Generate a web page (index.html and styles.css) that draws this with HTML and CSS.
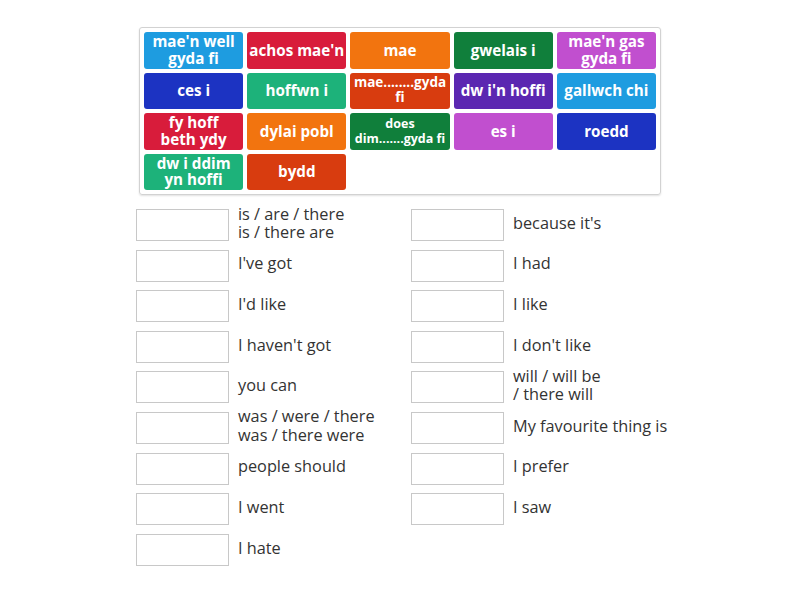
FILE: index.html
```html
<!DOCTYPE html>
<html>
<head>
<meta charset="utf-8">
<link rel="stylesheet" href="styles.css">
</head>
<body>
<div class="page">
  <div class="bank">
    <div class="tile c-sky">mae'n well<br>gyda fi</div>
    <div class="tile c-red">achos mae'n</div>
    <div class="tile c-orange">mae</div>
    <div class="tile c-green">gwelais i</div>
    <div class="tile c-magenta">mae'n gas<br>gyda fi</div>
    <div class="tile c-navy">ces i</div>
    <div class="tile c-teal">hoffwn i</div>
    <div class="tile c-rust small">mae........gyda fi</div>
    <div class="tile c-purple">dw i'n hoffi</div>
    <div class="tile c-sky">gallwch chi</div>
    <div class="tile c-red">fy hoff<br>beth ydy</div>
    <div class="tile c-orange">dylai pobl</div>
    <div class="tile c-green smaller">does dim.......gyda fi</div>
    <div class="tile c-magenta">es i</div>
    <div class="tile c-navy">roedd</div>
    <div class="tile c-teal">dw i ddim<br>yn hoffi</div>
    <div class="tile c-rust">bydd</div>
  </div>

  <div class="pairs">
    <div class="pair"><div class="slot"></div><div class="label">is / are / there<br>is / there are</div></div>
    <div class="pair"><div class="slot"></div><div class="label">I've got</div></div>
    <div class="pair"><div class="slot"></div><div class="label">I'd like</div></div>
    <div class="pair"><div class="slot"></div><div class="label">I haven't got</div></div>
    <div class="pair"><div class="slot"></div><div class="label">you can</div></div>
    <div class="pair"><div class="slot"></div><div class="label">was / were / there<br>was / there were</div></div>
    <div class="pair"><div class="slot"></div><div class="label">people should</div></div>
    <div class="pair"><div class="slot"></div><div class="label">I went</div></div>
    <div class="pair"><div class="slot"></div><div class="label">I hate</div></div>
    <div class="pair"><div class="slot"></div><div class="label">because it's</div></div>
    <div class="pair"><div class="slot"></div><div class="label">I had</div></div>
    <div class="pair"><div class="slot"></div><div class="label">I like</div></div>
    <div class="pair"><div class="slot"></div><div class="label">I don't like</div></div>
    <div class="pair"><div class="slot"></div><div class="label">will / will be<br>/ there will</div></div>
    <div class="pair"><div class="slot"></div><div class="label">My favourite thing is</div></div>
    <div class="pair"><div class="slot"></div><div class="label">I prefer</div></div>
    <div class="pair"><div class="slot"></div><div class="label">I saw</div></div>
  </div>
</div>
</body>
</html>
```

FILE: styles.css
```css
html, body {
  margin: 0;
  padding: 0;
  background: #ffffff;
}

body {
  font-family: "Open Sans", "Liberation Sans", sans-serif;
  color: #333333;
}

.page {
  width: 800px;
  padding-top: 27px;
}

.bank {
  margin-left: 139px;
  width: 522px;
  box-sizing: border-box;
  border: 1px solid #d2d2d2;
  border-radius: 3px;
  padding: 4px;
  display: grid;
  grid-template-columns: repeat(5, 1fr);
  grid-auto-rows: 36.5px;
  gap: 4px;
  box-shadow: 0 1px 2px rgba(0, 0, 0, 0.12);
}

.tile {
  display: flex;
  align-items: center;
  justify-content: center;
  text-align: center;
  color: #ffffff;
  font-weight: 700;
  font-size: 15.2px;
  line-height: 16.5px;
  border-radius: 3px;
  padding: 0 0 1px 0;
  box-sizing: border-box;
  overflow: hidden;
}

.tile.small {
  font-size: 13.5px;
  line-height: 15.5px;
}

.tile.smaller {
  font-size: 12.5px;
  line-height: 15px;
}

.c-sky { background: #1e9ce0; }
.c-red { background: #d81c3b; }
.c-orange { background: #f2740f; }
.c-green { background: #107f3b; }
.c-magenta { background: #c14fcf; }
.c-navy { background: #1c33c2; }
.c-teal { background: #1db27a; }
.c-rust { background: #d83c0f; }
.c-purple { background: #5b27b1; }

.pairs {
  margin-top: 14px;
  margin-left: 136px;
  display: grid;
  grid-template-columns: 275px 275px;
  grid-template-rows: repeat(9, 32px);
  grid-auto-flow: column;
  row-gap: 8.6px;
}

.pair {
  display: flex;
  align-items: center;
}

.slot {
  width: 93px;
  height: 32px;
  box-sizing: border-box;
  border: 1px solid #c8c8c8;
  background: #ffffff;
  flex: none;
}

.label {
  margin-left: 9px;
  padding-bottom: 4px;
  font-size: 16.3px;
  line-height: 18.5px;
  color: #333333;
  white-space: nowrap;
}
```
